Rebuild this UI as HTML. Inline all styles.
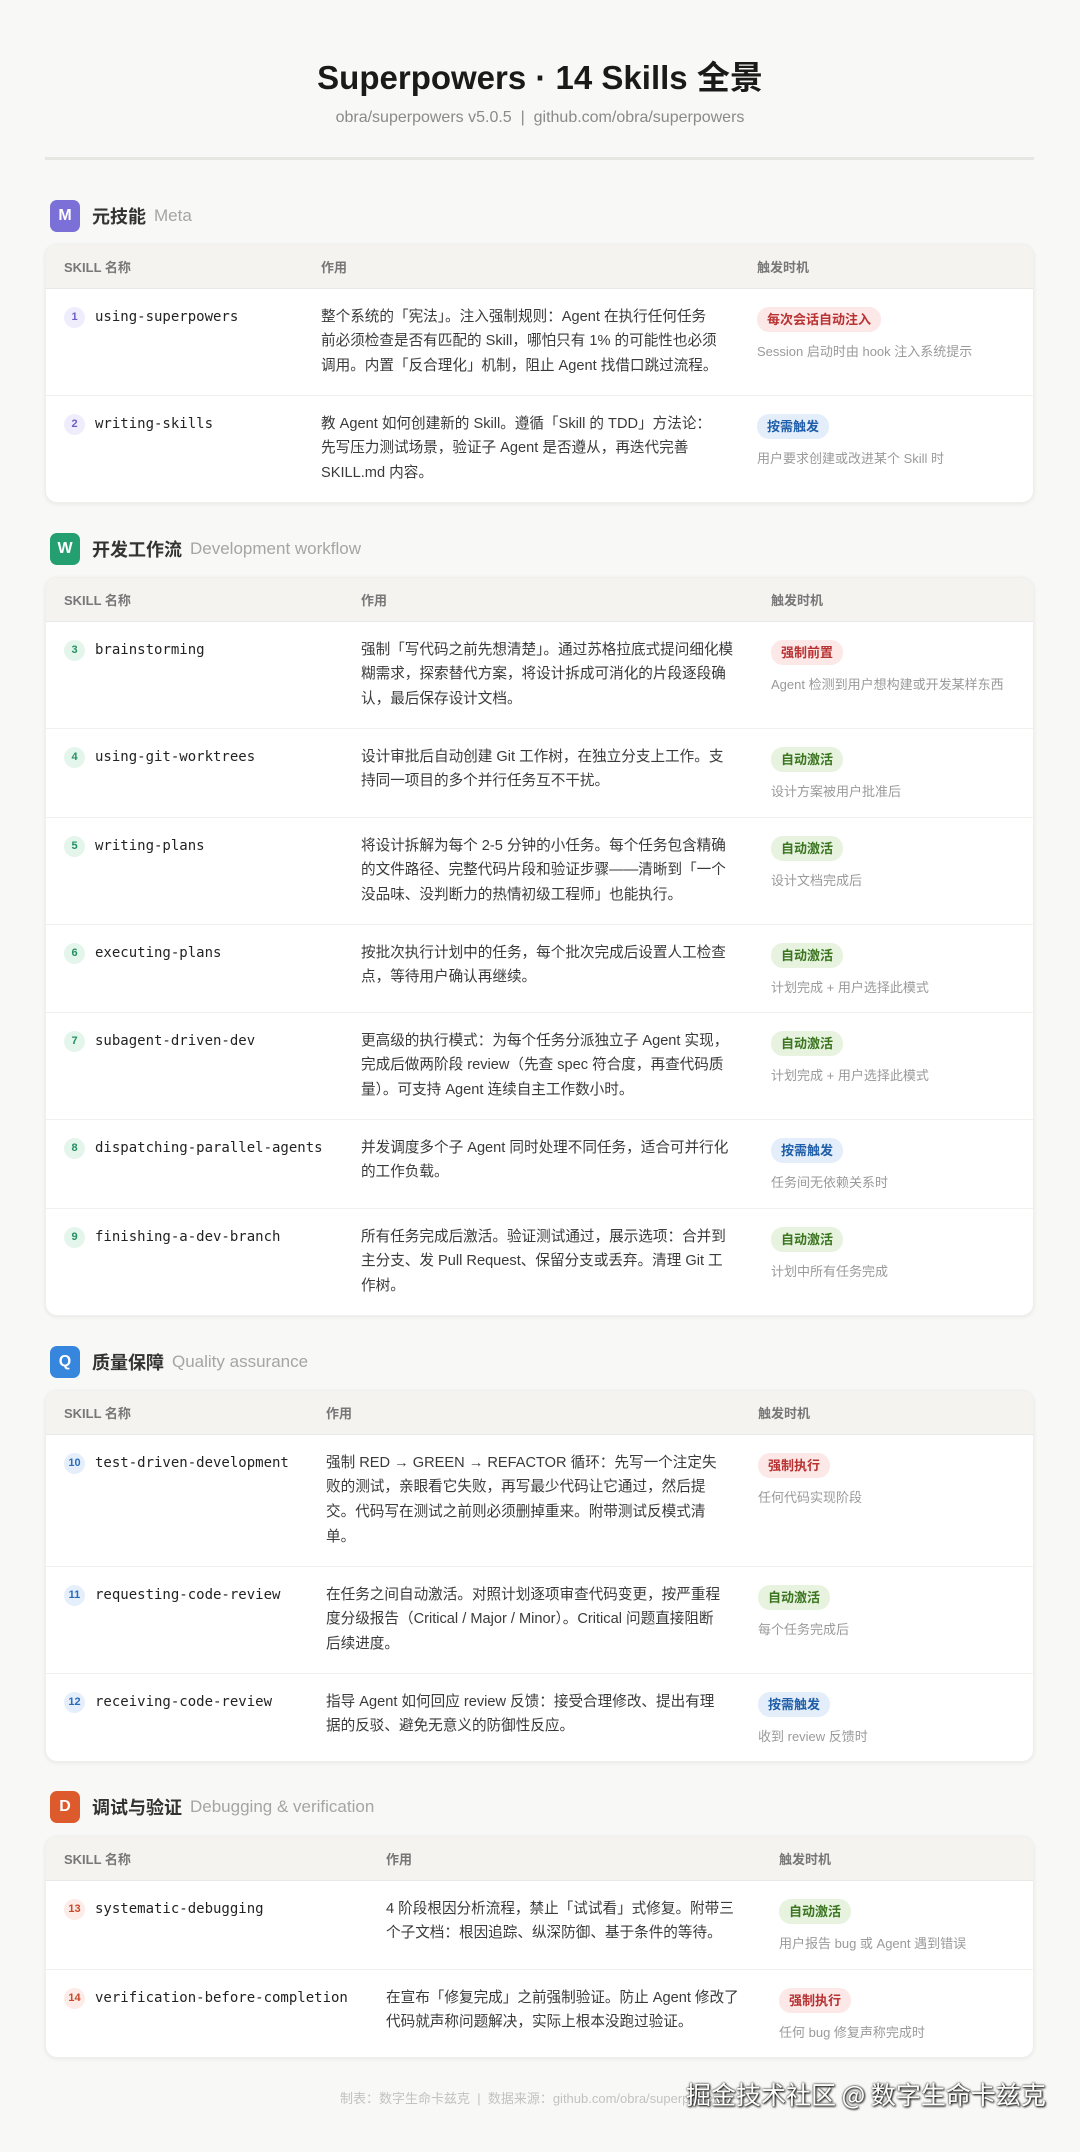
<!DOCTYPE html>
<html><head><meta charset="utf-8">
<style>
*{margin:0;padding:0;box-sizing:border-box}
body{width:1080px;height:2152px;background:#f8f8f6;font-family:"Liberation Sans","Noto Sans CJK SC",sans-serif;color:#333;position:relative;overflow:hidden}
h1{position:absolute;top:56px;left:0;width:1080px;text-align:center;font-size:33px;font-weight:bold;color:#1a1a1a;line-height:44px}
.sub{position:absolute;top:107px;left:0;width:1080px;text-align:center;font-size:16px;color:#8a8a8a;line-height:22px}
.div{position:absolute;top:157px;left:45px;width:989px;height:3px;background:#e6e6e3}
.sec{position:absolute;left:50px;height:32px;display:flex;align-items:center}
.bd{width:30px;height:32px;border-radius:7px;color:#fff;font-size:16px;font-weight:bold;display:flex;align-items:center;justify-content:center}
.sec b{font-size:18px;color:#333;margin-left:12px}
.sec span{font-size:17px;color:#a5a5a5;margin-left:8px}
.card{position:absolute;left:45px;width:989px;background:#fff;border-radius:12px;box-shadow:0 1px 4px rgba(0,0,0,.07);overflow:hidden;border:1px solid #efefec}
table{border-collapse:collapse;width:989px;table-layout:fixed}
th{background:#f4f3f0;height:43px;text-align:left;font-size:13px;color:#777;font-weight:bold;padding-left:18px;border-bottom:1px solid #e8e8e5}
td{vertical-align:top;padding:18px 0 0 18px;border-bottom:1px solid #f0f0ed}
tr:last-child td{border-bottom:none}
.nm{display:flex;align-items:flex-start;font-family:"DejaVu Sans Mono","Liberation Mono",monospace;font-size:14px;color:#222;white-space:nowrap;line-height:20px}
.n{width:21px;height:21px;border-radius:50%;font-family:"Liberation Sans",sans-serif;font-size:11px;font-weight:bold;display:flex;align-items:center;justify-content:center;margin-right:10px;flex:none}
.d{font-size:14.6px;line-height:24.7px;color:#3a3a3a;white-space:nowrap;margin-top:-2px}
.t{display:inline-block;height:25px;line-height:25px;padding:0 10px;border-radius:12px;font-size:13px;font-weight:bold}
.r{background:#fde8e8;color:#b83232}.g{background:#e7f3df;color:#3b7520}.b{background:#e4eefa;color:#1f5ea8}
.w{font-size:13px;color:#9a9a9a;margin-top:9px;white-space:nowrap}
.foot{position:absolute;top:2088px;left:340px;font-size:13px;color:#c2c2c2;white-space:nowrap}
.wm{position:absolute;top:2076px;left:686px;font-size:25px;color:#fff;white-space:nowrap;text-shadow:0 0 2px #000,1px 1px 2px #000;font-family:"Noto Sans CJK SC",sans-serif}
</style></head><body>
<h1>Superpowers · 14 Skills 全景</h1>
<div class="sub">obra/superpowers v5.0.5 &nbsp;|&nbsp; github.com/obra/superpowers</div>
<div class="div"></div>

<div class="sec" style="top:200px"><div class="bd" style="background:#7b6fd8">M</div><b>元技能</b><span>Meta</span></div>
<div class="card" style="top:244px">
<table><colgroup><col style="width:257px"><col style="width:436px"><col></colgroup>
<tr><th>SKILL 名称</th><th>作用</th><th>触发时机</th></tr>
<tr style="height:107px"><td><div class="nm"><span class="n" style="background:#efedfb;color:#6a5fc8">1</span>using-superpowers</div></td><td><div class="d">整个系统的「宪法」。注入强制规则：Agent 在执行任何任务<br>前必须检查是否有匹配的 Skill，哪怕只有 1% 的可能性也必须<br>调用。内置「反合理化」机制，阻止 Agent 找借口跳过流程。</div></td><td><span class="t r">每次会话自动注入</span><div class="w">Session 启动时由 hook 注入系统提示</div></td></tr>
<tr style="height:107px"><td><div class="nm"><span class="n" style="background:#efedfb;color:#6a5fc8">2</span>writing-skills</div></td><td><div class="d">教 Agent 如何创建新的 Skill。遵循「Skill 的 TDD」方法论：<br>先写压力测试场景，验证子 Agent 是否遵从，再迭代完善<br>SKILL.md 内容。</div></td><td><span class="t b">按需触发</span><div class="w">用户要求创建或改进某个 Skill 时</div></td></tr>
</table></div>

<div class="sec" style="top:533px"><div class="bd" style="background:#24a070">W</div><b>开发工作流</b><span>Development workflow</span></div>
<div class="card" style="top:577px">
<table><colgroup><col style="width:297px"><col style="width:410px"><col></colgroup>
<tr><th>SKILL 名称</th><th>作用</th><th>触发时机</th></tr>
<tr style="height:107px"><td><div class="nm"><span class="n" style="background:#e4f5ec;color:#23915f">3</span>brainstorming</div></td><td><div class="d">强制「写代码之前先想清楚」。通过苏格拉底式提问细化模<br>糊需求，探索替代方案，将设计拆成可消化的片段逐段确<br>认，最后保存设计文档。</div></td><td><span class="t r">强制前置</span><div class="w">Agent 检测到用户想构建或开发某样东西</div></td></tr>
<tr style="height:89px"><td><div class="nm"><span class="n" style="background:#e4f5ec;color:#23915f">4</span>using-git-worktrees</div></td><td><div class="d">设计审批后自动创建 Git 工作树，在独立分支上工作。支<br>持同一项目的多个并行任务互不干扰。</div></td><td><span class="t g">自动激活</span><div class="w">设计方案被用户批准后</div></td></tr>
<tr style="height:107px"><td><div class="nm"><span class="n" style="background:#e4f5ec;color:#23915f">5</span>writing-plans</div></td><td><div class="d">将设计拆解为每个 2-5 分钟的小任务。每个任务包含精确<br>的文件路径、完整代码片段和验证步骤——清晰到「一个<br>没品味、没判断力的热情初级工程师」也能执行。</div></td><td><span class="t g">自动激活</span><div class="w">设计文档完成后</div></td></tr>
<tr style="height:88px"><td><div class="nm"><span class="n" style="background:#e4f5ec;color:#23915f">6</span>executing-plans</div></td><td><div class="d">按批次执行计划中的任务，每个批次完成后设置人工检查<br>点，等待用户确认再继续。</div></td><td><span class="t g">自动激活</span><div class="w">计划完成 + 用户选择此模式</div></td></tr>
<tr style="height:107px"><td><div class="nm"><span class="n" style="background:#e4f5ec;color:#23915f">7</span>subagent-driven-dev</div></td><td><div class="d">更高级的执行模式：为每个任务分派独立子 Agent 实现，<br>完成后做两阶段 review（先查 spec 符合度，再查代码质<br>量）。可支持 Agent 连续自主工作数小时。</div></td><td><span class="t g">自动激活</span><div class="w">计划完成 + 用户选择此模式</div></td></tr>
<tr style="height:89px"><td><div class="nm"><span class="n" style="background:#e4f5ec;color:#23915f">8</span>dispatching-parallel-agents</div></td><td><div class="d">并发调度多个子 Agent 同时处理不同任务，适合可并行化<br>的工作负载。</div></td><td><span class="t b">按需触发</span><div class="w">任务间无依赖关系时</div></td></tr>
<tr style="height:107px"><td><div class="nm"><span class="n" style="background:#e4f5ec;color:#23915f">9</span>finishing-a-dev-branch</div></td><td><div class="d">所有任务完成后激活。验证测试通过，展示选项：合并到<br>主分支、发 Pull Request、保留分支或丢弃。清理 Git 工<br>作树。</div></td><td><span class="t g">自动激活</span><div class="w">计划中所有任务完成</div></td></tr>
</table></div>

<div class="sec" style="top:1346px"><div class="bd" style="background:#3686de">Q</div><b>质量保障</b><span>Quality assurance</span></div>
<div class="card" style="top:1390px">
<table><colgroup><col style="width:262px"><col style="width:432px"><col></colgroup>
<tr><th>SKILL 名称</th><th>作用</th><th>触发时机</th></tr>
<tr style="height:132px"><td><div class="nm"><span class="n" style="background:#e5effb;color:#2a6cb8">10</span>test-driven-development</div></td><td><div class="d">强制 RED → GREEN → REFACTOR 循环：先写一个注定失<br>败的测试，亲眼看它失败，再写最少代码让它通过，然后提<br>交。代码写在测试之前则必须删掉重来。附带测试反模式清<br>单。</div></td><td><span class="t r">强制执行</span><div class="w">任何代码实现阶段</div></td></tr>
<tr style="height:107px"><td><div class="nm"><span class="n" style="background:#e5effb;color:#2a6cb8">11</span>requesting-code-review</div></td><td><div class="d">在任务之间自动激活。对照计划逐项审查代码变更，按严重程<br>度分级报告（Critical / Major / Minor）。Critical 问题直接阻断<br>后续进度。</div></td><td><span class="t g">自动激活</span><div class="w">每个任务完成后</div></td></tr>
<tr style="height:88px"><td><div class="nm"><span class="n" style="background:#e5effb;color:#2a6cb8">12</span>receiving-code-review</div></td><td><div class="d">指导 Agent 如何回应 review 反馈：接受合理修改、提出有理<br>据的反驳、避免无意义的防御性反应。</div></td><td><span class="t b">按需触发</span><div class="w">收到 review 反馈时</div></td></tr>
</table></div>

<div class="sec" style="top:1791px"><div class="bd" style="background:#dc5a2c">D</div><b>调试与验证</b><span>Debugging &amp; verification</span></div>
<div class="card" style="top:1836px">
<table><colgroup><col style="width:322px"><col style="width:393px"><col></colgroup>
<tr><th>SKILL 名称</th><th>作用</th><th>触发时机</th></tr>
<tr style="height:89px"><td><div class="nm"><span class="n" style="background:#fcebe6;color:#c9472a">13</span>systematic-debugging</div></td><td><div class="d">4 阶段根因分析流程，禁止「试试看」式修复。附带三<br>个子文档：根因追踪、纵深防御、基于条件的等待。</div></td><td><span class="t g">自动激活</span><div class="w">用户报告 bug 或 Agent 遇到错误</div></td></tr>
<tr style="height:88px"><td><div class="nm"><span class="n" style="background:#fcebe6;color:#c9472a">14</span>verification-before-completion</div></td><td><div class="d">在宣布「修复完成」之前强制验证。防止 Agent 修改了<br>代码就声称问题解决，实际上根本没跑过验证。</div></td><td><span class="t r">强制执行</span><div class="w">任何 bug 修复声称完成时</div></td></tr>
</table></div>

<div class="foot">制表：数字生命卡兹克 &nbsp;|&nbsp; 数据来源：github.com/obra/superpowers</div>
<div class="wm">掘金技术社区 @ 数字生命卡兹克</div>
</body></html>
